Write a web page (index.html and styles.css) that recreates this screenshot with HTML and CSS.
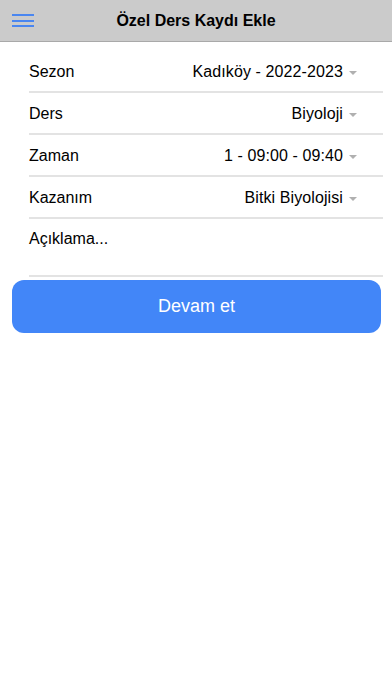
FILE: index.html
```html
<!DOCTYPE html>
<html lang="tr">
<head>
<meta charset="UTF-8" />
<meta name="viewport" content="width=device-width, initial-scale=1" />
<title>Özel Ders Kaydı Ekle</title>
<link rel="stylesheet" href="styles.css">
</head>
<body>

<header class="topbar">
  <button class="menu-btn" aria-label="Menü">
    <svg width="22" height="14" viewBox="0 0 22 14">
      <rect x="0" y="0" width="22" height="2" fill="#4a86f0" />
      <rect x="0" y="6" width="22" height="2" fill="#4a86f0" />
      <rect x="0" y="11" width="22" height="2" fill="#4a86f0" />
    </svg>
  </button>
  <div class="title">Özel Ders Kaydı Ekle</div>
</header>

<main>
  <form class="form-list">
    <div class="row">
      <span class="label">Sezon</span>
      <span class="value">Kadıköy - 2022-2023<i class="caret"></i></span>
    </div>
    <div class="row">
      <span class="label">Ders</span>
      <span class="value">Biyoloji<i class="caret"></i></span>
    </div>
    <div class="row">
      <span class="label">Zaman</span>
      <span class="value">1 - 09:00 - 09:40<i class="caret"></i></span>
    </div>
    <div class="row">
      <span class="label">Kazanım</span>
      <span class="value">Bitki Biyolojisi<i class="caret"></i></span>
    </div>
    <div class="row note">
      <span class="label">Açıklama...</span>
    </div>
  </form>

  <button class="submit">Devam et</button>
</main>

</body>
</html>
```

FILE: styles.css
```css
body {
  margin: 0; padding: 0;
  font-family: 'Liberation Sans', Arial, sans-serif;
  background: #fff;
  color: #000;
}
.topbar {
  height: 41px;
  background: #cbcbcb;
  border-bottom: 1px solid #a9a9a9;
  display: flex;
  align-items: center;
  justify-content: center;
  position: relative;
}
.menu-btn {
  position: absolute;
  left: 12px;
  top: 14px;
  padding: 0;
  border: 0;
  background: none;
  line-height: 0;
}
.title {
  font-weight: 700;
  font-size: 16px;
  margin-top: 1px;
}
main {
  padding: 0 11px 0 12px;
}
.form-list {
  margin: 0 -2px 0 17px;
  padding-top: 9px;
}
.row {
  box-sizing: border-box;
  height: 42px;
  padding-top: 2px;
  display: flex;
  align-items: center;
  justify-content: space-between;
  border-bottom: 2px solid #e3e3e3;
  font-size: 16px;
}
.value {
  display: flex;
  align-items: center;
  letter-spacing: 0.1px;
}
.caret {
  width: 0;
  height: 0;
  border-left: 4.5px solid transparent;
  border-right: 4.5px solid transparent;
  border-top: 4.5px solid #b0b0b0;
  margin: 1px 26px 0 6px;
}
.row.note {
  height: 58px;
  align-items: flex-start;
  padding-top: 1px;
}
.row.note .label {
  margin-top: 10px;
}
.submit {
  display: block;
  width: 100%;
  height: 53px;
  margin-top: 3px;
  border: 0;
  border-radius: 12px;
  background: #4286f8;
  color: #fff;
  font-family: 'Liberation Sans', Arial, sans-serif;
  font-size: 18px;
}
```
